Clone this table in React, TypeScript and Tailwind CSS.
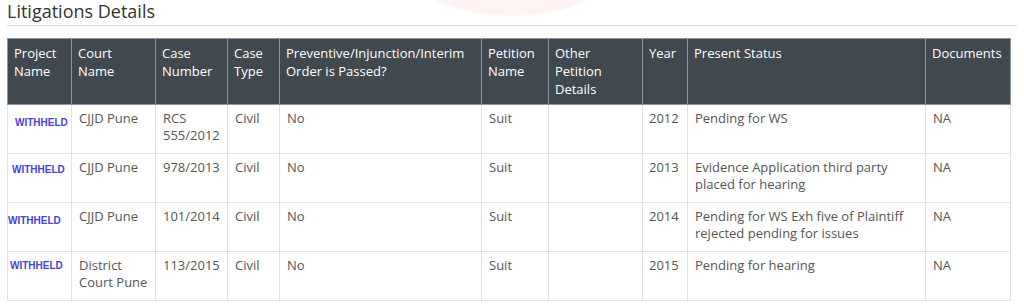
import React from "react";

type Row = {
  offset: string;
  court: string;
  caseNo: string;
  year: string;
  status: string;
};

const rows: Row[] = [
  { offset: "pt-[12px] pl-[7px]", court: "CJJD Pune", caseNo: "RCS 555/2012", year: "2012", status: "Pending for WS" },
  { offset: "pt-[10px] pl-[4px]", court: "CJJD Pune", caseNo: "978/2013", year: "2013", status: "Evidence Application third party placed for hearing" },
  { offset: "pt-[12px] pl-[0px]", court: "CJJD Pune", caseNo: "101/2014", year: "2014", status: "Pending for WS Exh five of Plaintiff rejected pending for issues" },
  { offset: "pt-[8px] pl-[2px]", court: "District Court Pune", caseNo: "113/2015", year: "2015", status: "Pending for hearing" },
];

const headers = [
  "Project Name",
  "Court Name",
  "Case Number",
  "Case Type",
  "Preventive/Injunction/Interim Order is Passed?",
  "Petition Name",
  "Other Petition Details",
  "Year",
  "Present Status",
  "Documents",
];

const widths = ["w-[64px]", "w-[84px]", "w-[72px]", "w-[52px]", "w-[202px]", "w-[67px]", "w-[94px]", "w-[45px]", "w-[238px]", "w-[85px]"];

const cell = "border border-[#e2e2e2] px-[7px] pt-[5px] pb-[9px] align-top";

export default function App() {
  return (
    <div className="relative h-[307px] w-[1024px] overflow-hidden bg-white font-['Open_Sans',sans-serif]">
      {/* faint watermark seal behind the heading */}
      <div className="pointer-events-none absolute left-[318px] top-[-370px] h-[386px] w-[386px] rounded-full bg-[radial-gradient(circle_at_50%_50%,#fde6e4_0%,#fdeeed_70%,#fff6f5_100%)] opacity-70" />

      <div className="relative px-[7px]">
        <h2 className="border-b border-[#dcdcdc] pb-[3px] pt-[1px] text-[18px] leading-[21px] text-[#333]">
          Litigations Details
        </h2>

        <table className="mt-[12px] w-[1003px] table-fixed border-collapse text-[13px] leading-[17px]">
          <colgroup>
            {widths.map((w, i) => (
              <col key={i} className={w} />
            ))}
          </colgroup>
          <thead>
            <tr className="h-[65px] bg-[#414950] text-white">
              {headers.map((h) => (
                <th
                  key={h}
                  className="border border-[#8e969c] px-[6px] pt-[5px] pb-[6px] text-left align-top font-medium leading-[18px]"
                >
                  {h}
                </th>
              ))}
            </tr>
          </thead>
          <tbody className="text-[#555]">
            {rows.map((r) => (
              <tr key={r.caseNo}>
                <td className="border border-[#e2e2e2] p-0 align-top">
                  <div className={r.offset}>
                    <span className="block font-['Liberation_Sans',Arial,sans-serif] text-[10px] font-bold leading-[12px] text-[#4a3fd6]">
                      WITHHELD
                    </span>
                  </div>
                </td>
                <td className={cell}>{r.court}</td>
                <td className={cell}>{r.caseNo}</td>
                <td className={cell}>Civil</td>
                <td className={cell}>No</td>
                <td className={cell}>Suit</td>
                <td className={cell}></td>
                <td className="border border-[#e2e2e2] px-[6px] pt-[5px] pb-[9px] align-top">{r.year}</td>
                <td className={cell}>{r.status}</td>
                <td className={cell}>NA</td>
              </tr>
            ))}
          </tbody>
        </table>
      </div>
    </div>
  );
}
